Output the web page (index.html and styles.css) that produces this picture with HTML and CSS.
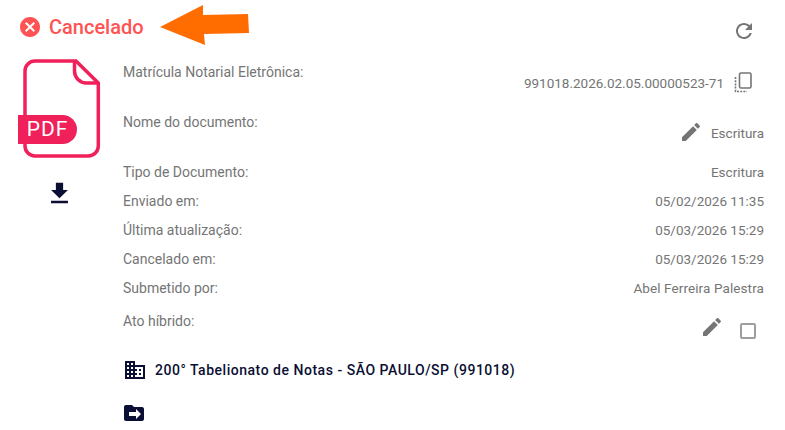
FILE: index.html
```html
<!DOCTYPE html>
<html lang="en">
<head>
    <meta charset="UTF-8">
    <meta name="viewport" content="width=device-width, initial-scale=1.0">
    <title>Documento</title>
    <link rel="stylesheet" href="styles.css">
</head>
<body>
    <div class="page">
        <header class="status-bar">
            <div class="status">
                <svg class="status-icon" viewBox="2 2 20 20"><path d="M12 2C6.47 2 2 6.47 2 12s4.47 10 10 10 10-4.47 10-10S17.53 2 12 2zm5 13.59L15.59 17 12 13.41 8.41 17 7 15.59 10.59 12 7 8.41 8.41 7 12 10.59 15.59 7 17 8.41 13.41 12 17 15.59z"/></svg>
                <span>Cancelado</span>
            </div>
            <svg class="refresh" viewBox="0 0 24 24"><path d="M17.65 6.35C16.2 4.9 14.21 4 12 4c-4.42 0-7.99 3.58-7.99 8s3.57 8 7.99 8c3.73 0 6.84-2.55 7.73-6h-2.08c-.82 2.33-3.04 4-5.65 4-3.31 0-6-2.69-6-6s2.69-6 6-6c1.66 0 3.14.69 4.22 1.78L13 11h7V4l-2.35 2.35z"/></svg>
        </header>

        <!-- annotation drawn over the screenshot -->
        <svg class="arrow" viewBox="0 0 92 42"><path d="M1 22 L44 0 L44 10 L89 9 L90 28 L45 29 L46 40 Z"/></svg>

        <div class="content">
            <aside class="file-col">
                <div class="pdf-icon">
                    <svg class="pdf-sheet" viewBox="0 0 80 102"><path d="M13 3 H54 L76.3 25 V88 a10 10 0 0 1 -10 10 H13 a10 10 0 0 1 -10 -10 V13 a10 10 0 0 1 10 -10 Z"/><path d="M52.5 3 V13 a12 12 0 0 0 12 12 H76.3"/></svg>
                    <span class="pdf-tag">PDF</span>
                </div>
                <svg class="download" viewBox="0 0 24 24"><path d="M19 9h-4V3H9v6H5l7 7 7-7zM5 18v2h14v-2H5z"/></svg>
            </aside>

            <section class="details">
                <div class="row row-tall">
                    <span class="label">Matrícula Notarial Eletrônica:</span>
                    <span class="value value-low">
                        991018.2026.02.05.00000523-71
                        <svg class="copy" viewBox="0 0 18 21"><rect x="5.5" y="1" width="11.5" height="15" rx="1.5"/><path class="dots" d="M1.5 5v14.5h11.5"/></svg>
                    </span>
                </div>
                <div class="row row-tall">
                    <span class="label">Nome do documento:</span>
                    <span class="value value-low">
                        <svg class="edit" viewBox="0 0 24 24"><path d="M3 17.25V21h3.75L17.81 9.94l-3.75-3.75L3 17.25zM20.71 7.04c.39-.39.39-1.02 0-1.41l-2.34-2.34c-.39-.39-1.02-.39-1.41 0l-1.83 1.83 3.75 3.75 1.83-1.83z"/></svg>
                        Escritura
                    </span>
                </div>
                <div class="row"><span class="label">Tipo de Documento:</span><span class="value">Escritura</span></div>
                <div class="row"><span class="label">Enviado em:</span><span class="value">05/02/2026 11:35</span></div>
                <div class="row"><span class="label">Última atualização:</span><span class="value">05/03/2026 15:29</span></div>
                <div class="row"><span class="label">Cancelado em:</span><span class="value">05/03/2026 15:29</span></div>
                <div class="row"><span class="label">Submetido por:</span><span class="value value-name">Abel Ferreira Palestra</span></div>
                <div class="row row-hybrid">
                    <span class="label">Ato híbrido:</span>
                    <span class="value value-icons">
                        <svg class="edit" viewBox="0 0 24 24"><path d="M3 17.25V21h3.75L17.81 9.94l-3.75-3.75L3 17.25zM20.71 7.04c.39-.39.39-1.02 0-1.41l-2.34-2.34c-.39-.39-1.02-.39-1.41 0l-1.83 1.83 3.75 3.75 1.83-1.83z"/></svg>
                        <span class="checkbox"></span>
                    </span>
                </div>
                <div class="office">
                    <svg class="office-icon" viewBox="2 3 20 18"><path d="M12 7V3H2v18h20V7H12zM6 19H4v-2h2v2zm0-4H4v-2h2v2zm0-4H4V9h2v2zm0-4H4V5h2v2zm4 12H8v-2h2v2zm0-4H8v-2h2v2zm0-4H8V9h2v2zm0-4H8V5h2v2zm10 12h-8v-2h2v-2h-2v-2h2v-2h-2V9h8v10zm-2-8h-2v2h2v-2zm0 4h-2v2h2v-2z"/></svg>
                    <span>200° Tabelionato de Notas - SÃO PAULO/SP (991018)</span>
                </div>
                <svg class="folder" viewBox="2 4 20 16"><path d="M20 6h-8l-2-2H4c-1.1 0-1.99.9-1.99 2L2 18c0 1.1.9 2 2 2h16c1.1 0 2-.9 2-2V8c0-1.1-.9-2-2-2zm-6 12v-3H7v-4h7V8l5 5-5 5z"/></svg>
            </section>
        </div>
    </div>
</body>
</html>
```

FILE: styles.css
```css
body {
    margin: 0;
    background-color: #ffffff;
    font-family: Roboto, "Liberation Sans", sans-serif;
    font-size: 13.5px;
    color: #757575;
    overflow: hidden;
}
.page {
    position: relative;
    height: 430px;
    padding: 15px 21px 0 20px;
    box-sizing: border-box;
}
.status-bar {
    display: flex;
    justify-content: space-between;
    align-items: flex-start;
    height: 43px;
}
.status {
    display: flex;
    align-items: center;
    gap: 9px;
    height: 24px;
    font-size: 20px;
    font-weight: 500;
    color: #ff5252;
}
.status-icon {
    width: 20px;
    height: 20px;
    fill: #ff5252;
}
.refresh {
    width: 24px;
    height: 24px;
    margin: 4px 8px 0 0;
    fill: #757575;
}
.arrow {
    position: absolute;
    left: 159px;
    top: 5px;
    width: 92px;
    height: 42px;
    fill: #ff6d00;
}
.content {
    display: flex;
}
.file-col {
    display: flex;
    flex-direction: column;
    align-items: center;
    width: 78px;
    flex-shrink: 0;
    margin-right: 25px;
}
.pdf-icon {
    position: relative;
    align-self: flex-start;
    width: 82px;
    height: 102px;
}
.pdf-sheet {
    position: absolute;
    left: 2px;
    top: 0;
    width: 80px;
    height: 102px;
    fill: none;
    stroke: #f0205a;
    stroke-width: 3.5;
}
.pdf-tag {
    position: absolute;
    left: -2px;
    top: 57px;
    width: 59px;
    height: 29px;
    background-color: #f0205a;
    border-radius: 0 15px 15px 0;
    color: #ffffff;
    font-size: 21px;
    letter-spacing: 1px;
    line-height: 29px;
    text-align: center;
}
.download {
    width: 29px;
    height: 29px;
    margin-top: 19px;
    fill: #0a0f33;
}
.details {
    flex: 1;
    display: flex;
    flex-direction: column;
}
.row {
    display: flex;
    justify-content: space-between;
    align-items: flex-start;
    height: 29px;
    line-height: 29px;
}
.row-tall {
    height: 50px;
}
.label {
    font-size: 14px;
}
.value {
    display: flex;
    align-items: center;
    gap: 8px;
}
.value-low {
    margin-top: 11px;
}
.value-name {
    letter-spacing: 0.1px;
}
.copy {
    width: 18px;
    height: 21px;
    margin: -2px 12px 0 2px;
    fill: none;
    stroke: #757575;
    stroke-width: 1.6;
}
.copy .dots {
    stroke-dasharray: 2 1.2;
}
.edit {
    width: 24px;
    height: 24px;
    margin-top: -3px;
    fill: #757575;
}
.row-hybrid {
    height: 53px;
    margin-top: 4px;
}
.value-icons {
    align-items: flex-start;
    gap: 16px;
    margin: 0 8px 0 0;
}
.value-icons .edit {
    margin-top: 8px;
}
.checkbox {
    width: 12px;
    height: 12px;
    margin-top: 16px;
    border: 2px solid #9e9e9e;
    border-radius: 2px;
}
.office {
    display: flex;
    align-items: center;
    gap: 10px;
    height: 20px;
    font-size: 14px;
    font-weight: 500;
    letter-spacing: 0.52px;
    color: #0a0f33;
}
.office-icon {
    width: 20px;
    height: 18px;
    margin-left: 2px;
    fill: #0a0f33;
}
.folder {
    width: 20px;
    height: 16px;
    margin: 25px 0 0 1px;
    fill: #0a0f33;
}
```
